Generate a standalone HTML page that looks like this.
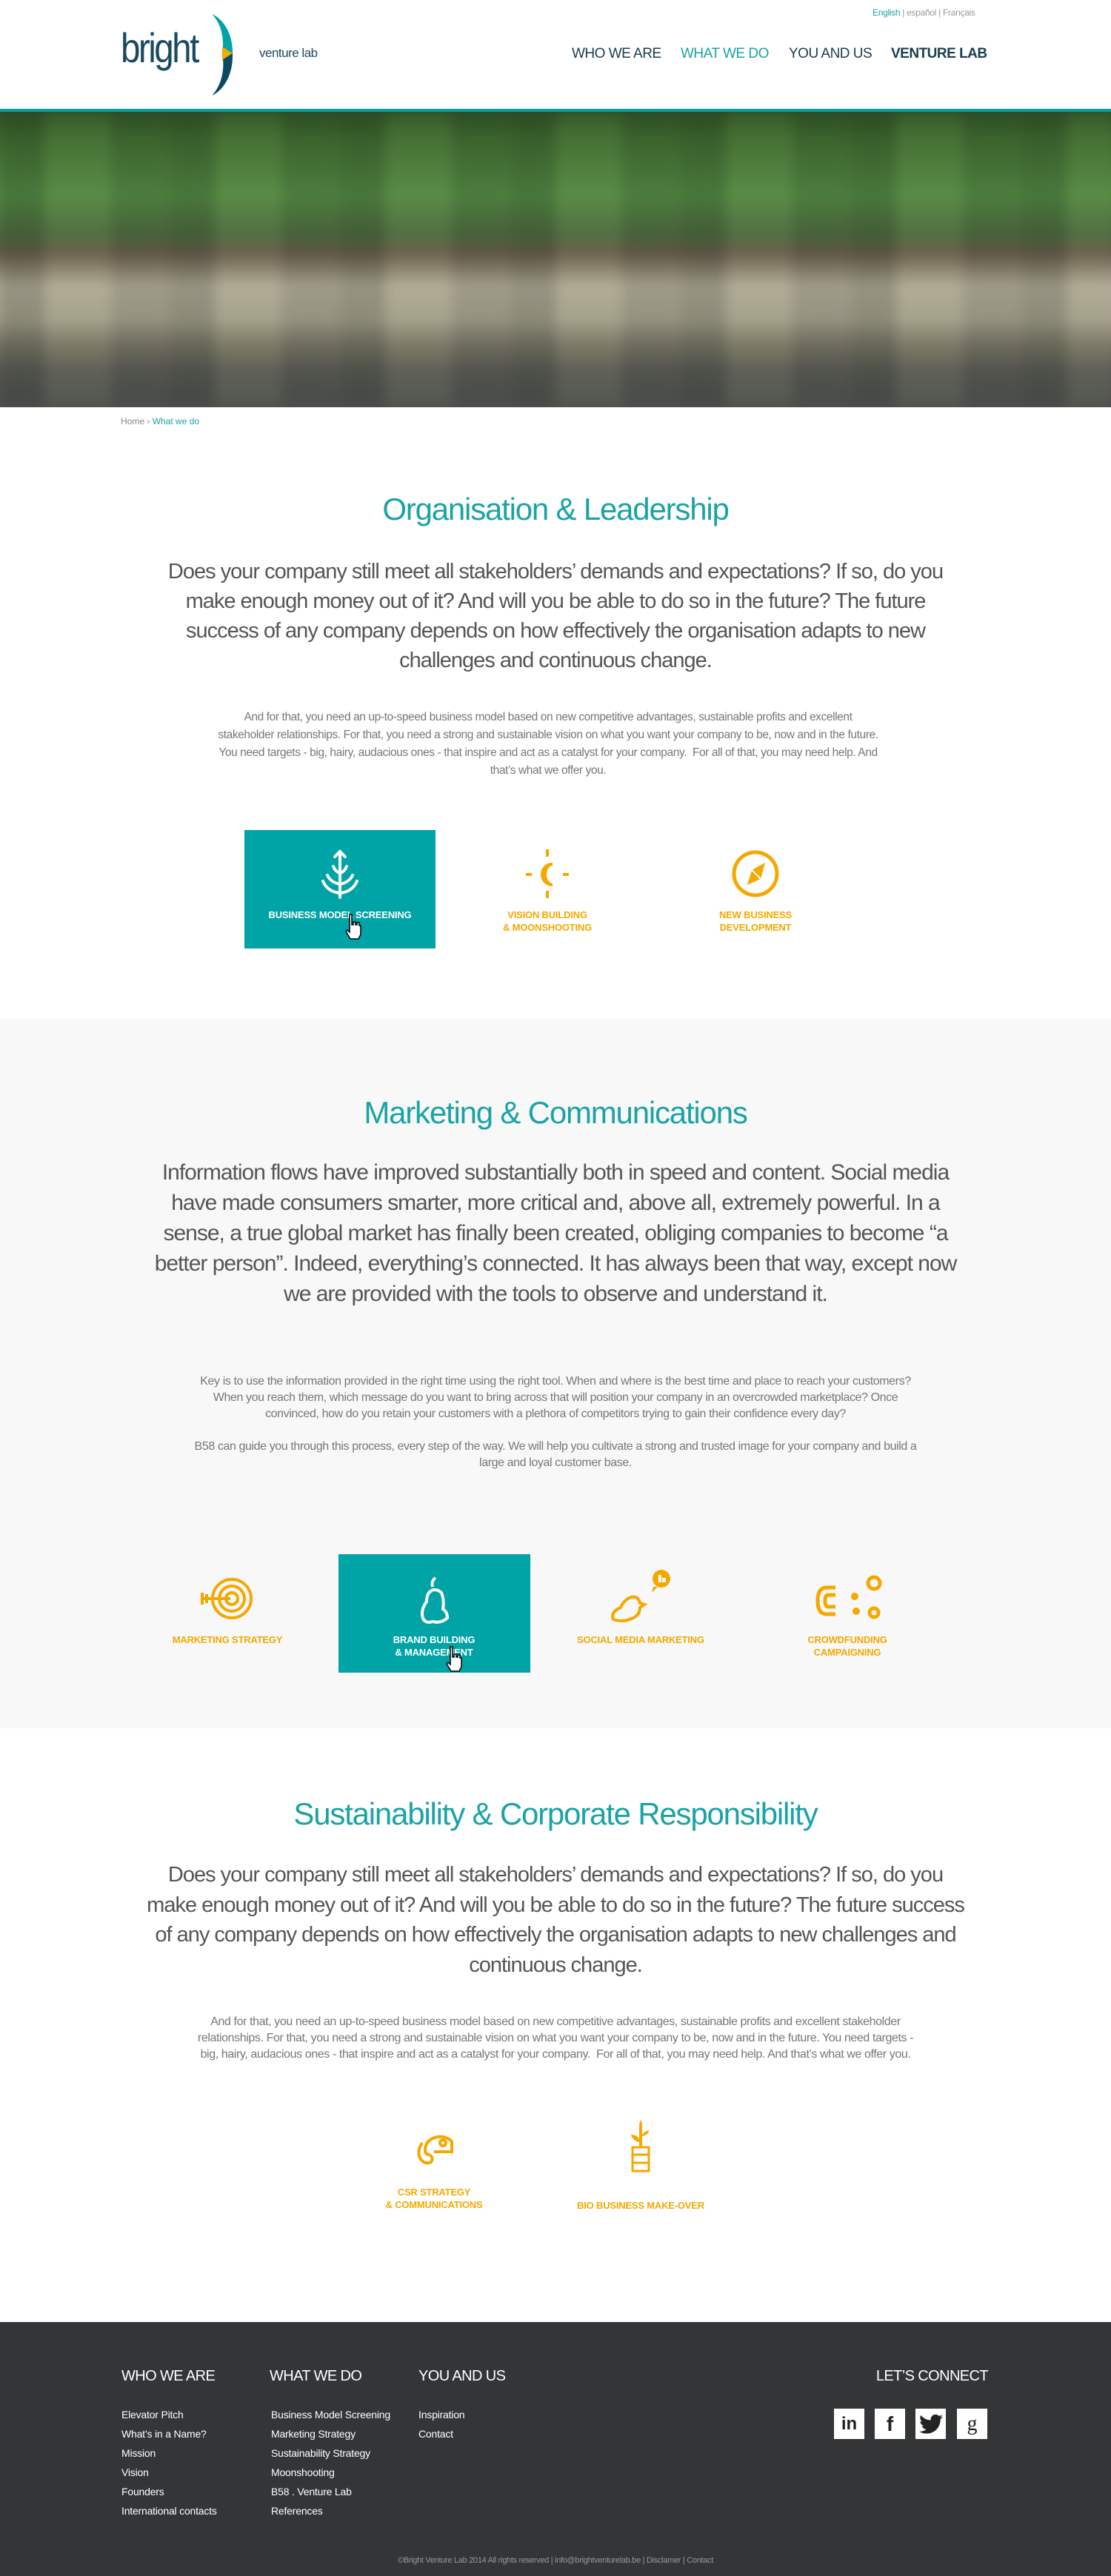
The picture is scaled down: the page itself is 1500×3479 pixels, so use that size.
<!DOCTYPE html>
<html><head><meta charset="utf-8"><style>
*{margin:0;padding:0;box-sizing:border-box}
body{width:1500px;height:3479px;position:relative;font-family:"Liberation Sans",sans-serif;background:#fff;overflow:hidden}
.a{position:absolute}
.nav{top:62px;font-size:19px;color:#1a3d50;letter-spacing:-0.5px}
.title{left:0;width:1500px;text-align:center;color:#1aa3a6;font-size:42px;letter-spacing:-1.2px}
.lead{text-align:center;color:#555;font-size:29px;line-height:40px;letter-spacing:-1px}
.small{text-align:center;color:#777;font-size:15.5px;line-height:24px;letter-spacing:-0.4px}
.lbl{color:#f5a800;font-size:13px;font-weight:bold;line-height:17px;text-align:center;width:260px;letter-spacing:-0.2px}
.lbl.w{color:#fff}
.fh{color:#fff;font-size:20px;top:3198px;letter-spacing:-0.6px;white-space:nowrap}
.fl{color:#fff;font-size:14px;line-height:26px;top:3248px;letter-spacing:-0.2px}
.soc{top:3253px;width:41px;height:41px;background:#fff;color:#222;font-weight:bold;font-size:28px;text-align:center;line-height:41px}
</style></head><body>
<div class="a" style="left:1178px;top:10px;font-size:12px;color:#999;letter-spacing:-0.3px"><span style="color:#1aa3a6">English</span> | español | Français</div>
<div class="a" style="left:163px;top:30px;font-size:56px;color:#1a4a60;letter-spacing:-3px;line-height:70px;transform:scaleX(0.85);transform-origin:left">bright</div>
<svg class="a" style="left:278px;top:17px" width="62" height="114" viewBox="0 0 62 114"><path d="M8 2 A40 54 0 0 1 36 55 L22 55 A36 50 0 0 0 8 2Z" fill="#00a3a6"/><path d="M36 55 A40 56 0 0 1 8 112 A36 52 0 0 0 22 55Z" fill="#0b4a63"/><path d="M22 46 L36 55 L22 64 Z" fill="#f5a800"/></svg>
<div class="a" style="left:350px;top:62px;font-size:17px;color:#1a4a60;letter-spacing:-0.5px">venture lab</div>
<div class="a nav" style="left:772px">WHO WE ARE</div>
<div class="a nav" style="left:919px;color:#1aa3a6">WHAT WE DO</div>
<div class="a nav" style="left:1065px">YOU AND US</div>
<div class="a nav" style="left:1203px;font-weight:bold">VENTURE LAB</div>
<div class="a" style="left:0;top:147px;width:1500px;height:4px;background:#00a3a6"></div>
<div class="a" style="left:0;top:151px;width:1500px;height:399px;overflow:hidden">
<div style="position:absolute;left:-20px;top:-20px;width:1540px;height:440px;background:linear-gradient(180deg,#24401f 0%,#3f6a30 12%,#558a44 30%,#4e6a40 42%,#6a5c4c 48%,#b4ac9a 58%,#a9a290 68%,#7c7668 76%,#5b5a56 84%,#4a4b4b 100%);filter:blur(6px)"></div>
<div style="position:absolute;left:0;top:0;width:1500px;height:399px;background:repeating-linear-gradient(90deg,rgba(20,40,20,.18) 0 60px,rgba(140,180,110,.08) 60px 150px,rgba(20,40,20,.12) 150px 230px);filter:blur(8px)"></div>
</div>
<div class="a" style="left:163px;top:562px;font-size:12px;color:#888">Home › <span style="color:#1aa3a6">What we do</span></div>
<div class="a title" style="top:664px">Organisation &amp; Leadership</div>
<div class="a lead" style="left:200px;width:1100px;top:752px">Does your company still meet all stakeholders’ demands and expectations? If so, do you make enough money out of it? And will you be able to do so in the future? The future success of any company depends on how effectively the organisation adapts to new challenges and continuous change.</div>
<div class="a small" style="left:290px;width:900px;top:957px">And for that, you need an up-to-speed business model based on new competitive advantages, sustainable profits and excellent stakeholder relationships. For that, you need a strong and sustainable vision on what you want your company to be, now and in the future. You need targets - big, hairy, audacious ones - that inspire and act as a catalyst for your company.&nbsp; For all of that, you may need help. And that’s what we offer you.</div>
<div class="a" style="left:330px;top:1121px;width:258px;height:160px;background:#00a3a6"></div>
<svg class="a" style="left:424px;top:1146px" width="70" height="70" viewBox="0 0 70 70" fill="none" stroke="#fff" stroke-width="4" stroke-linecap="round"><path d="M35 4V66M28 11L35 4L42 11M26 24Q28 30 34 33M44 24Q42 30 36 33M18 36Q22 45 34 48M52 36Q48 45 36 48M12 44Q18 58 34 60M58 44Q52 58 36 60"/></svg>
<div class="a lbl w" style="left:329px;top:1227px">BUSINESS MODEL SCREENING</div>
<svg class="a" style="left:466px;top:1233px" width="24" height="36" viewBox="0 0 24 36"><path d="M6 2h3v14h2v-4h3v4h2v-3h3v4h2v12l-3 6H7l-6-10 2-2 3 3z" fill="#fff" stroke="#000" stroke-width="1.5"/></svg>
<svg class="a" style="left:704px;top:1145px" width="70" height="70" viewBox="0 0 70 70" fill="none" stroke="#f5a800" stroke-width="4"><path d="M35 2v10M35 58v10M6 36h8M56 36h8"/><path d="M42 22A14 14 0 1 0 42 50A10 14 0 0 1 42 22Z"/></svg>
<div class="a lbl" style="left:609px;top:1227px">VISION BUILDING<br>&amp; MOONSHOOTING</div>
<svg class="a" style="left:985px;top:1145px" width="70" height="70" viewBox="0 0 70 70"><circle cx="35" cy="35" r="29" fill="none" stroke="#f5a800" stroke-width="5"/><path d="M48 20L42 42L24 50L30 30Z" fill="#f5a800"/><path d="M30 30L42 42" stroke="#fff" stroke-width="2"/></svg>
<div class="a lbl" style="left:890px;top:1227px">NEW BUSINESS<br>DEVELOPMENT</div>
<div class="a" style="left:0;top:1376px;width:1500px;height:958px;background:#f8f8f8"></div>
<div class="a title" style="top:1479px">Marketing &amp; Communications</div>
<div class="a lead" style="left:195px;width:1110px;top:1563px;line-height:41px;font-size:30px">Information flows have improved substantially both in speed and content. Social media have made consumers smarter, more critical and, above all, extremely powerful. In a sense, a true global market has finally been created, obliging companies to become “a better person”. Indeed, everything’s connected. It has always been that way, except now we are provided with the tools to observe and understand it.</div>
<div class="a small" style="left:262px;width:976px;top:1855px;line-height:22px;font-size:16px">Key is to use the information provided in the right time using the right tool. When and where is the best time and place to reach your customers? When you reach them, which message do you want to bring across that will position your company in an overcrowded marketplace? Once convinced, how do you retain your customers with a plethora of competitors trying to gain their confidence every day?<br><br>B58 can guide you through this process, every step of the way. We will help you cultivate a strong and trusted image for your company and build a large and loyal customer base.</div>
<div class="a" style="left:457px;top:2099px;width:259px;height:160px;background:#00a3a6"></div>
<svg class="a" style="left:267px;top:2129px" width="76" height="60" viewBox="0 0 76 60" fill="none" stroke="#f5a800" stroke-width="4"><circle cx="46" cy="30" r="26"/><circle cx="46" cy="30" r="17"/><circle cx="46" cy="30" r="8"/><path d="M4 30h40M6 22v16M12 24v12"/></svg>
<div class="a lbl" style="left:177px;top:2206px">MARKETING STRATEGY</div>
<svg class="a" style="left:562px;top:2127px" width="50" height="70" viewBox="0 0 50 70" fill="none" stroke="#fff" stroke-width="4"><path d="M26 4Q20 8 22 16"/><path d="M24 20Q14 22 14 36Q8 44 8 52Q8 64 18 64Q24 62 26 64Q36 64 42 58Q42 50 36 46Q38 34 34 24Q30 20 24 20Z"/></svg>
<div class="a lbl w" style="left:456px;top:2206px">BRAND BUILDING<br>&amp; MANAGEMENT</div>
<svg class="a" style="left:602px;top:2222px" width="24" height="36" viewBox="0 0 24 36"><path d="M6 2h3v14h2v-4h3v4h2v-3h3v4h2v12l-3 6H7l-6-10 2-2 3 3z" fill="#fff" stroke="#000" stroke-width="1.5"/></svg>
<svg class="a" style="left:820px;top:2115px" width="90" height="80" viewBox="0 0 90 80"><g fill="none" stroke="#f5a800" stroke-width="4"><path d="M8 72Q4 62 18 56Q22 46 32 42Q42 40 44 50L50 52L44 56Q44 68 30 72Q20 76 8 72Z"/></g><circle cx="73" cy="17" r="12" fill="#f5a800"/><path d="M62 28L60 36L68 28Z" fill="#f5a800"/><path d="M69 12h4v10h-4zM74 16h5v6h-5z" fill="#fff"/></svg>
<div class="a lbl" style="left:735px;top:2206px">SOCIAL MEDIA MARKETING</div>
<svg class="a" style="left:1098px;top:2124px" width="96" height="70" viewBox="0 0 96 70"><g fill="none" stroke="#f5a800" stroke-width="5"><path d="M30 20H18Q6 20 6 38Q6 56 18 56H30"/><path d="M30 30H20Q16 30 16 38Q16 46 20 46H30"/><circle cx="82" cy="14" r="8"/><circle cx="82" cy="54" r="6"/></g><circle cx="56" cy="32" r="5" fill="#f5a800"/><circle cx="58" cy="52" r="5" fill="#f5a800"/></svg>
<div class="a lbl" style="left:1014px;top:2206px">CROWDFUNDING<br>CAMPAIGNING</div>
<div class="a title" style="top:2426px">Sustainability &amp; Corporate Responsibility</div>
<div class="a lead" style="left:195px;width:1110px;top:2512px;line-height:40.5px">Does your company still meet all stakeholders’ demands and expectations? If so, do you make enough money out of it? And will you be able to do so in the future? The future success of any company depends on how effectively the organisation adapts to new challenges and continuous change.</div>
<div class="a small" style="left:262px;width:976px;top:2720px;line-height:22px;font-size:16px">And for that, you need an up-to-speed business model based on new competitive advantages, sustainable profits and excellent stakeholder relationships. For that, you need a strong and sustainable vision on what you want your company to be, now and in the future. You need targets - big, hairy, audacious ones - that inspire and act as a catalyst for your company.&nbsp; For all of that, you may need help. And that’s what we offer you.</div>
<svg class="a" style="left:560px;top:2880px" width="56" height="46" viewBox="0 0 56 46" fill="none" stroke="#f5a800" stroke-width="4"><path d="M20 30Q14 30 14 24Q14 10 30 6Q42 4 50 12V26H26"/><path d="M20 30Q26 34 22 40Q14 44 8 36Q2 26 10 14"/><circle cx="38" cy="14" r="4"/></svg>
<div class="a lbl" style="left:456px;top:2952px">CSR STRATEGY<br>&amp; COMMUNICATIONS</div>
<svg class="a" style="left:850px;top:2863px" width="30" height="72" viewBox="0 0 30 72"><g fill="#f5a800"><path d="M15 0Q19 8 15 14Q11 8 15 0Z"/><rect x="13" y="10" width="4" height="26"/><path d="M13 30Q4 28 2 20Q10 20 13 26Z"/><path d="M17 22Q26 20 26 14Q19 16 17 20Z"/></g><g fill="none" stroke="#f5a800" stroke-width="3"><rect x="4" y="37" width="22" height="32"/><path d="M4 47h22M4 58h22"/></g></svg>
<div class="a lbl" style="left:735px;top:2970px">BIO BUSINESS MAKE-OVER</div>
<div class="a" style="left:0;top:3136px;width:1500px;height:343px;background:#333537"></div>
<div class="a fh" style="left:164px">WHO WE ARE</div>
<div class="a fh" style="left:364px">WHAT WE DO</div>
<div class="a fh" style="left:565px">YOU AND US</div>
<div class="a fh" style="left:1134px;width:200px;text-align:right">LET’S CONNECT</div>
<div class="a fl" style="left:164px">Elevator Pitch<br>What’s in a Name?<br>Mission<br>Vision<br>Founders<br>International contacts</div>
<div class="a fl" style="left:366px">Business Model Screening<br>Marketing Strategy<br>Sustainability Strategy<br>Moonshooting<br>B58 . Venture Lab<br>References</div>
<div class="a fl" style="left:565px">Inspiration<br>Contact</div>
<div class="a soc" style="left:1126px;font-size:24px">in</div>
<div class="a soc" style="left:1181px">f</div>
<div class="a soc" style="left:1236px"><svg width="32" height="28" viewBox="0 0 24 20" style="margin-top:7px"><path d="M24 2.4a10 10 0 0 1-2.8.8A5 5 0 0 0 23.3.5a10 10 0 0 1-3.1 1.2A4.9 4.9 0 0 0 11.8 6 14 14 0 0 1 1.7.9a4.9 4.9 0 0 0 1.5 6.6A4.9 4.9 0 0 1 1 6.9a4.9 4.9 0 0 0 3.9 4.8 5 5 0 0 1-2.2.1 4.9 4.9 0 0 0 4.6 3.4A9.9 9.9 0 0 1 0 17.3 14 14 0 0 0 7.5 19.5c9.1 0 14-7.5 14-14v-.6A10 10 0 0 0 24 2.4z" fill="#222"/></svg></div>
<div class="a soc" style="left:1292px;font-weight:normal;font-family:'Liberation Serif',serif">g</div>
<div class="a" style="left:0;width:1500px;top:3452px;text-align:center;font-size:11px;color:#999;letter-spacing:-0.3px">©Bright Venture Lab 2014 All rights reserved | info@brightventurelab.be | Disclamer | Contact</div>
</body></html>
